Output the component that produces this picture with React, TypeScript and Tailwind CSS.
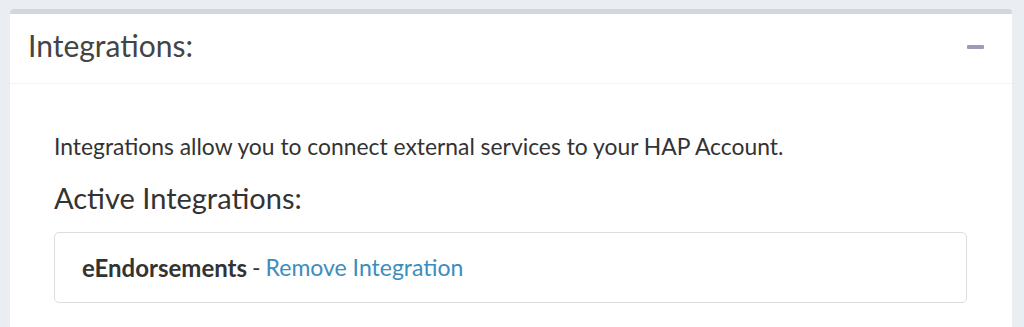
export default function App() {
  return (
    <div className="w-[1024px] h-[327px] bg-[#eaedf1] pt-[9px] pl-[10px] pr-[12px] overflow-hidden" style={{ fontFamily: "Lato, 'Open Sans', sans-serif" }}>
      <div className="bg-white border-t-[5px] border-[#d2d6de] rounded-t-[4px] h-[330px]">
        <div className="h-[70px] flex items-start justify-between pl-[18px] pr-[28px] pt-[16px] border-b border-[#f4f4f4]">
          <h3 className="text-[30px] text-[#444] leading-[30px]">Integrations:</h3>
          <div className="mt-[15px] w-[17px] h-[4px] bg-[#97a0b3] rounded-[1px]" />
        </div>
        <div className="pl-[44px] pr-[45px] pt-[47px]">
          <p className="text-[22.85px] text-[#333] leading-[30px]">Integrations allow you to connect external services to your HAP Account.</p>
          <h4 className="text-[29px] text-[#333] leading-[36px] mt-[19px]">Active Integrations:</h4>
          <div className="mt-[16px] h-[71px] border border-[#ddd] rounded-[5px] flex items-center pl-[27px] text-[23px] text-[#333]">
            <span className="font-bold text-[24px]">eEndorsements</span>
            <span className="mx-[5px]">-</span>
            <a className="text-[#3c8dbc]">Remove Integration</a>
          </div>
        </div>
      </div>
    </div>
  );
}
